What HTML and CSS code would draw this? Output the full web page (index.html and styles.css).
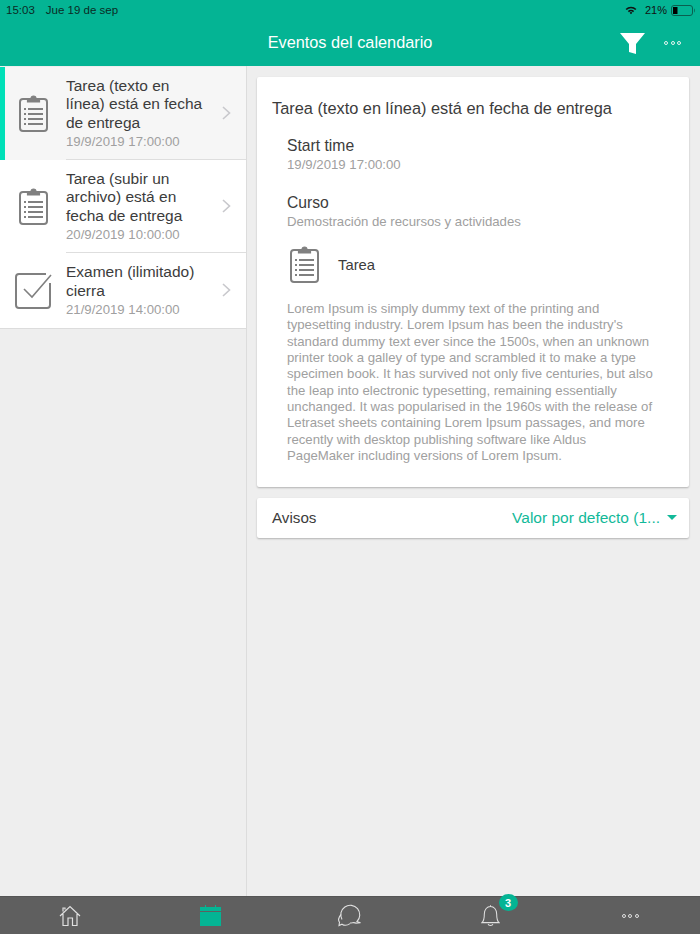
FILE: index.html
```html
<!DOCTYPE html>
<html lang="es">
<head>
<meta charset="utf-8">
<title>Eventos del calendario</title>
<link rel="stylesheet" href="styles.css">
</head>
<body>
<svg class="defs" width="0" height="0" aria-hidden="true">
  <symbol id="clip" viewBox="0 0 29 37">
    <rect x="1" y="4" width="27" height="32" rx="3" fill="none" stroke="#808080" stroke-width="2"/>
    <path d="M8.500 7V3.500h3.500a2.500 2.500 0 0 1 5 0h3.500V7z" fill="#808080" stroke="#808080" stroke-width="1.200"/>
    <path d="M9 14h15M9 19h15M9 24h15M9 29h15" stroke="#808080" stroke-width="1.800"/>
    <path d="M5 14h2M5 19h2M5 24h2M5 29h2" stroke="#808080" stroke-width="1.800"/>
  </symbol>
</svg>
<div class="app">
  <header class="top">
    <div class="status">
      <div class="status-left"><span>15:03</span><span>Jue 19 de sep</span></div>
      <div class="status-right">
        <svg width="12" height="9" viewBox="0 0 13 10"><path d="M.5 3.200a8.600 8.600 0 0 1 12 0l-1.300 1.300a6.800 6.800 0 0 0-9.400 0zM3 5.600a5 5 0 0 1 7 0L8.800 6.900a3.300 3.300 0 0 0-4.600 0zM5 7.500a2 2 0 0 1 3 0L6.500 9.200z" fill="#111"/></svg>
        <span>21%</span>
        <svg width="24" height="11" viewBox="0 0 24 11"><rect x=".5" y=".5" width="21" height="10" rx="2.500" fill="none" stroke="#0a5f50"/><rect x="2" y="2" width="4.500" height="7" fill="#000"/><path d="M23 3.500c1 .3 1 3.700 0 4z" fill="#0a5f50"/></svg>
      </div>
    </div>
    <div class="navbar">
      <h1>Eventos del calendario</h1>
      <svg class="filter" width="25" height="21" viewBox="0 0 25 21"><path d="M0 0h25L16 11v10L9 19V11z" fill="#fff"/></svg>
      <div class="dots light"><i></i><i></i><i></i></div>
    </div>
  </header>

  <main class="split">
    <aside class="list">
      <a class="item active">
        <svg class="ico" width="29" height="37"><use href="#clip"/></svg>
        <div class="item-text">
          <div class="item-title">Tarea (texto en línea) está en fecha de entrega</div>
          <div class="item-date">19/9/2019 17:00:00</div>
        </div>
        <svg class="chev" width="9" height="14" viewBox="0 0 9 14"><path d="M1 1l6.500 6L1 13" fill="none" stroke="#c8c8cc" stroke-width="1.600"/></svg>
      </a>
      <a class="item">
        <svg class="ico" width="29" height="37"><use href="#clip"/></svg>
        <div class="item-text">
          <div class="item-title">Tarea (subir un archivo) está en fecha de entrega</div>
          <div class="item-date">20/9/2019 10:00:00</div>
        </div>
        <svg class="chev" width="9" height="14" viewBox="0 0 9 14"><path d="M1 1l6.500 6L1 13" fill="none" stroke="#c8c8cc" stroke-width="1.600"/></svg>
      </a>
      <a class="item last">
        <svg class="ico wide" width="37" height="37" viewBox="0 0 37 37"><path d="M31 2H4a3 3 0 0 0-3 3v28a3 3 0 0 0 3 3h28a3 3 0 0 0 3-3V11" fill="none" stroke="#808080" stroke-width="2"/><path d="M9 17l8 8L36 3" fill="none" stroke="#808080" stroke-width="1.600"/></svg>
        <div class="item-text">
          <div class="item-title">Examen (ilimitado) cierra</div>
          <div class="item-date">21/9/2019 14:00:00</div>
        </div>
        <svg class="chev" width="9" height="14" viewBox="0 0 9 14"><path d="M1 1l6.500 6L1 13" fill="none" stroke="#c8c8cc" stroke-width="1.600"/></svg>
      </a>
    </aside>

    <section class="detail">
      <article class="card event">
        <h2>Tarea (texto en línea) está en fecha de entrega</h2>
        <div class="field">
          <div class="label">Start time</div>
          <div class="sub">19/9/2019 17:00:00</div>
        </div>
        <div class="field">
          <div class="label">Curso</div>
          <div class="sub">Demostración de recursos y actividades</div>
        </div>
        <div class="kind">
          <svg width="29" height="37"><use href="#clip"/></svg>
          <span>Tarea</span>
        </div>
        <p class="lorem">Lorem Ipsum is simply dummy text of the printing and typesetting industry. Lorem Ipsum has been the industry's standard dummy text ever since the 1500s, when an unknown printer took a galley of type and scrambled it to make a type specimen book. It has survived not only five centuries, but also the leap into electronic typesetting, remaining essentially unchanged. It was popularised in the 1960s with the release of Letraset sheets containing Lorem Ipsum passages, and more recently with desktop publishing software like Aldus PageMaker including versions of Lorem Ipsum.</p>
      </article>
      <div class="card notices">
        <span class="notices-label">Avisos</span>
        <span class="select">Valor por defecto (1...</span>
        <span class="caret"></span>
      </div>
    </section>
  </main>

  <nav class="tabs">
    <div class="tab">
      <svg width="22" height="22" viewBox="0 0 22 22" fill="none" stroke="#e0e0e0" stroke-width="1.200"><path d="M1 11L11 1.500 21 11M4 9v11.500h5V13h4.500v7.500H18V9M4 6.500V3h2v1.500"/></svg>
    </div>
    <div class="tab">
      <svg width="21" height="21" viewBox="0 0 21 21"><path d="M0 2h21v4H0zM0 7h21v14H0z" fill="#04b494"/><path d="M5.500 0v3M15.500 0v3" stroke="#04b494" stroke-width="1"/></svg>
    </div>
    <div class="tab">
      <svg width="24" height="23" viewBox="0 0 24 23" fill="none" stroke="#e0e0e0" stroke-width="1.100"><path d="M4 15.500A9.500 9.500 0 1 1 19 17.500l3.500 1.300-4.500.3-2-.5a9.500 9.500 0 0 1-4 .4"/><path d="M3.200 10.500C.5 13 0 16 1.500 18.300L1 21.500l3-1.300c2 1.300 5 1.500 8-.6"/></svg>
    </div>
    <div class="tab">
      <span class="bell">
        <svg width="19" height="23" viewBox="0 0 20 23" fill="none" stroke="#e0e0e0" stroke-width="1.100"><path d="M1 19h18c-2-1.500-2.500-3-2.500-9C16.500 5 13.500 2 10 2S3.500 5 3.500 10c0 6-.5 7.500-2.500 9zM7.500 20.500c.5 2 4.500 2 5 0M10 2V.8"/></svg>
        <b class="badge">3</b>
      </span>
    </div>
    <div class="tab"><div class="dots light2"><i></i><i></i><i></i></div></div>
  </nav>
</div>
</body>
</html>
```
FILE: styles.css
```css
* { box-sizing: border-box; }
html, body { margin: 0; height: 100%; }
body { font-family: "Liberation Sans", Arial, sans-serif; background: #eeeeee; color: #3c3c3c; overflow: hidden; }
.defs { position: absolute; }
.app { width: 700px; height: 934px; display: flex; flex-direction: column; }

.top { height: 66px; flex: none; background: #04b494; display: flex; flex-direction: column; }
.status { height: 20px; display: flex; justify-content: space-between; align-items: center; padding: 0 5px 0 6px; font-size: 11.500px; color: #0b2b25; }
.status-left { display: flex; gap: 11px; }
.status-right { display: flex; align-items: center; gap: 7px; font-size: 11px; color: #111; }
.status-right span { margin-right: -3px; }
.status-right svg:first-child { margin-right: 1px; }
.navbar { flex: 1; display: flex; align-items: center; position: relative; padding-right: 19px; justify-content: flex-end; }
.navbar h1 { position: absolute; left: 0; right: 0; margin: 0 0 2px; text-align: center; font-size: 16.300px; font-weight: 400; color: #fff; }
.filter { margin-right: 19px; }
.dots { display: flex; gap: 2.500px; }
.dots i { width: 4px; height: 4px; border-radius: 50%; border: 1px solid #e4f5f1; display: block; }
.light2 i { border-color: #e0e0e0; }

.split { flex: 1; min-height: 0; display: flex; }
.list { width: 247px; flex: none; border-right: 1px solid #dcdcdc; padding-top: 1px; }
.item { display: flex; align-items: center; background: #fff; position: relative; padding-left: 19px; height: 93px; }
.item.active { background: #f6f6f6; box-shadow: inset 5px 0 0 #00e0b8; }
.item.last { height: 76px; border-bottom: 1px solid #dcdcdc; padding-left: 15px; }
.item::after { content: ""; position: absolute; left: 66px; right: 0; bottom: 0; height: 1px; background: #dedede; }
.item.last::after { display: none; }
.ico { flex: none; margin-right: 18px; }
.ico.wide { margin-right: 14px; }
.item-text { flex: 1; min-width: 0; padding-top: 1px; }
.item-title { font-size: 15.500px; line-height: 18.500px; color: #3c3c3c; width: 142px; }
.item-date { font-size: 13.200px; line-height: 18px; color: #a0a0a0; margin-top: 1px; }
.item.last .item-text { padding-top: 0; }
.item.last .item-title { line-height: 19px; }
.chev { flex: none; margin: 0 15px 2px 0; }

.detail { flex: 1; padding: 11px 11px 0 10px; display: flex; flex-direction: column; gap: 11px; }
.card { background: #fff; border-radius: 2px; box-shadow: 0 1px 2px rgba(0,0,0,.25); }
.event { height: 410px; padding: 21px 15px 0; }
.event h2 { margin: 0; font-size: 16.350px; line-height: 20px; font-weight: 400; color: #3c3c3c; }
.field { padding-left: 15px; }
.field:first-of-type { margin-top: 18px; }
.field + .field { margin-top: 19px; }
.label { font-size: 15.700px; line-height: 20px; }
.sub { font-size: 13.200px; line-height: 18px; color: #a0a0a0; }
.kind { display: flex; align-items: center; gap: 19px; padding-left: 18px; margin-top: 15px; font-size: 14.800px; }
.lorem { margin: 18px 19px 0 0; padding-left: 15px; font-size: 13.200px; line-height: 16.330px; color: #a0a0a0; }
.notices { height: 40px; display: flex; align-items: center; padding: 0 12px 0 15px; }
.notices-label { flex: 1; font-size: 15.200px; margin-bottom: 1px; }
.select { color: #12b999; font-size: 15.500px; }
.caret { width: 0; height: 0; margin-left: 7px; margin-bottom: 1px; border-left: 5px solid transparent; border-right: 5px solid transparent; border-top: 5px solid #12b999; }

.tabs { height: 38px; flex: none; background: #5f5f5f; display: grid; grid-template-columns: repeat(5, 1fr); align-items: center; border-top: 1px solid #555; }
.tab { display: flex; justify-content: center; align-items: center; }
.bell { position: relative; display: block; height: 23px; }
.badge { position: absolute; left: 18px; top: -10px; width: 19px; height: 17px; border-radius: 50%; background: #04b494; color: #fff; font-size: 11px; font-weight: 700; display: flex; align-items: center; justify-content: center; }
```
